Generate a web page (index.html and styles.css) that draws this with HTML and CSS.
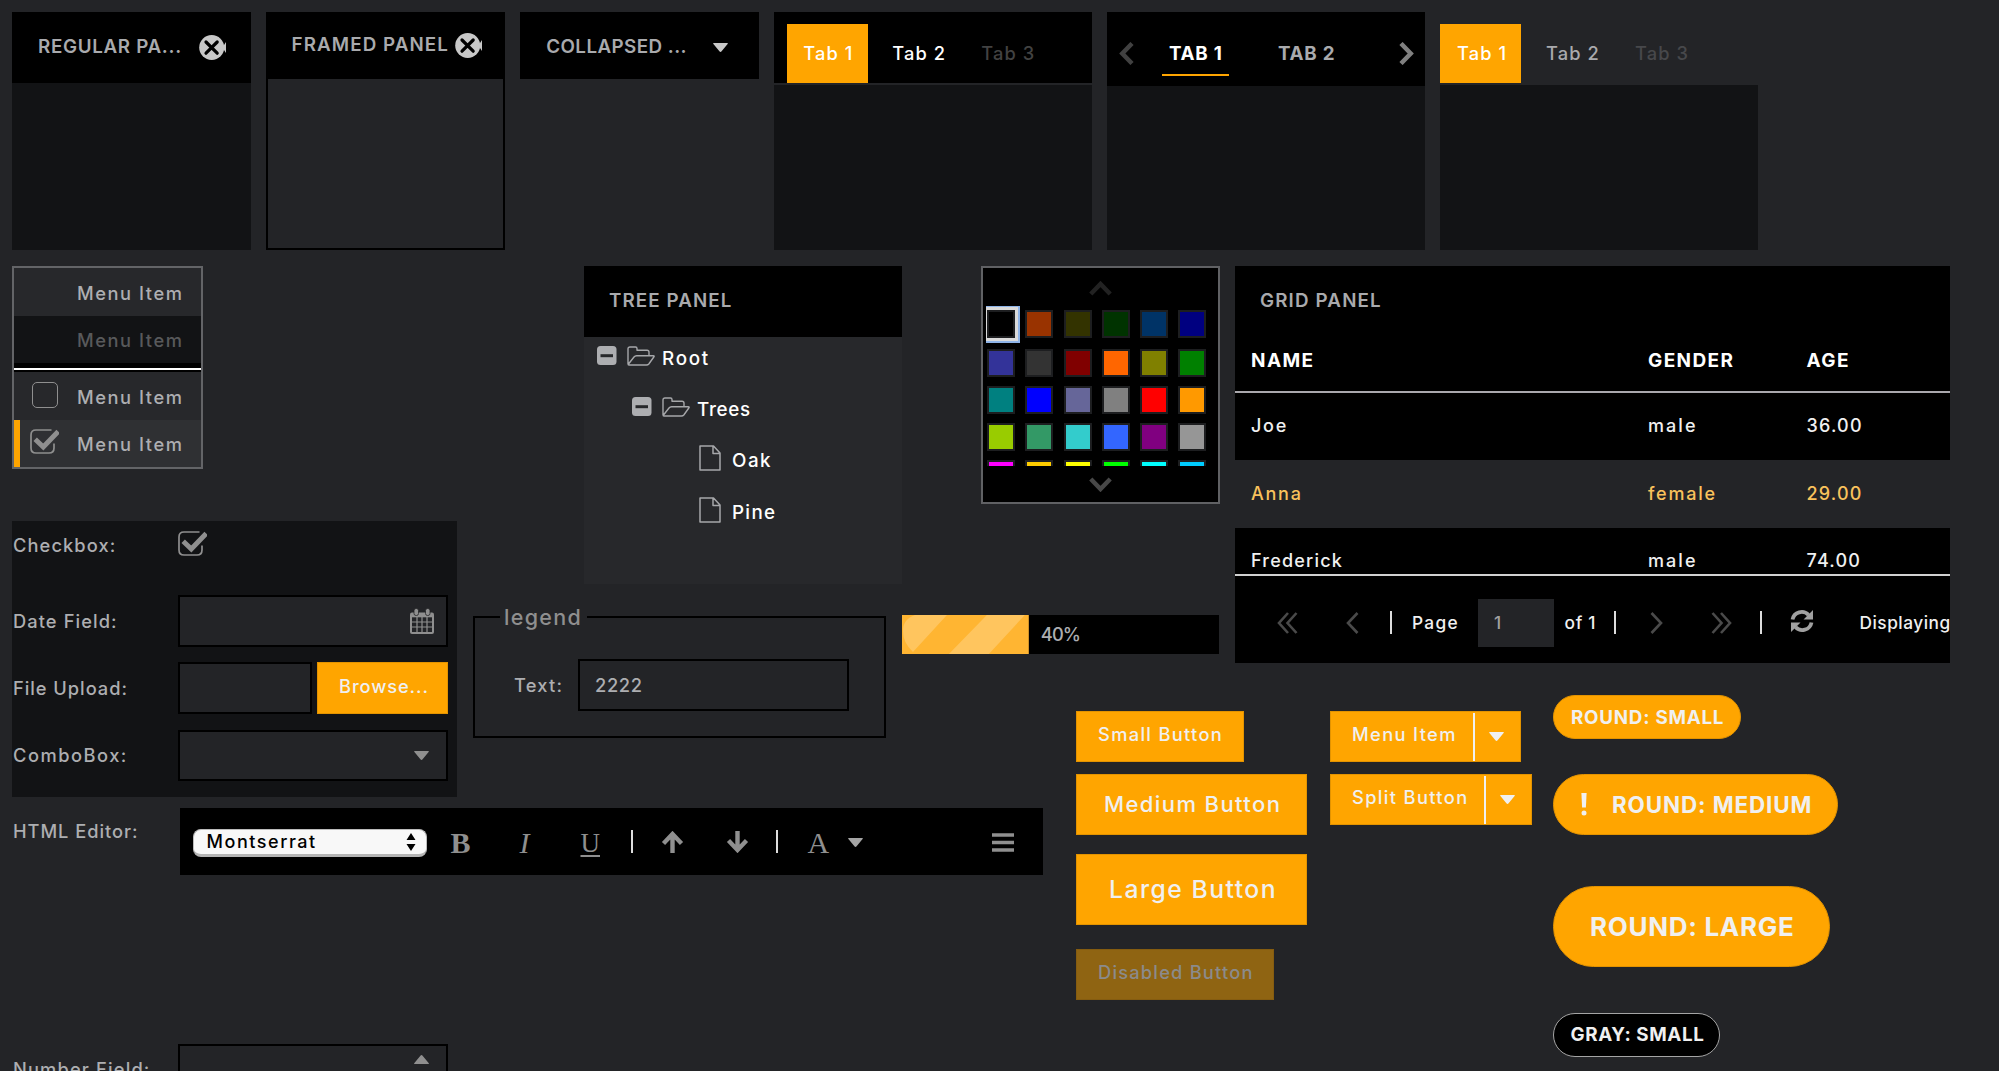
FILE: index.html
```html
<!DOCTYPE html>
<html lang="en">
<head>
<meta charset="utf-8">
<title>Theme Components</title>
<link rel="stylesheet" href="styles.css">
</head>
<body>
<svg class="defs" width="0" height="0">
  <symbol id="close" viewBox="0 0 27 25"><circle cx="12.7" cy="12.5" r="12.5" fill="#c8c8c8"/><path d="M27 7v11l-2-3v-5z" fill="#c8c8c8"/><path d="M7 7l11.200 11.200M18.200 7l-11.200 11.200" stroke="#000" stroke-width="3.200" stroke-linecap="round"/></symbol>
  <symbol id="down" viewBox="0 0 15 9"><path d="M.7 0h13.600q1 0 .3 1l-6 7.300q-1.100 1.200-2.200 0L.4 1q-.7-1 .3-1z" fill="currentColor"/></symbol>
  <symbol id="checked" viewBox="0 0 29 25"><path d="M21.500 1H6Q1 1 1 6v13q0 5 5 5h13q5 0 5-5v-4.500" fill="none" stroke="currentColor" stroke-width="1.700"/><path d="M7 12l6.300 6L26.500 4.300" fill="none" stroke="currentColor" stroke-width="5" stroke-linecap="square" stroke-linejoin="miter"/></symbol>
  <symbol id="minus" viewBox="0 0 20 19"><rect width="19.500" height="19" rx="3.500" fill="#adaeb1"/><path d="M3.500 9.700H16" stroke="#27282b" stroke-width="3"/></symbol>
  <symbol id="folder" viewBox="0 0 28 20"><path d="M1 18V3q0-2 2-2h5.500q1.500 0 1.500 1.500v1.700h10q2 0 2 2V9.700M1.300 18.200L7 11q1-1.300 2.500-1.300h16.700q1.600 0 .6 1.300l-5 7q-.9 1-2.300 1H2q-1.200 0-.7-.8z" fill="none" stroke="#a6a7aa" stroke-width="1.400" stroke-linejoin="round"/></symbol>
  <symbol id="file" viewBox="0 0 22 26"><path d="M1 1h13.500L21 8v17H1zM14 1v7.500h7" fill="none" stroke="#a6a7aa" stroke-width="1.500" stroke-linejoin="round"/></symbol>
  <symbol id="bars" viewBox="0 0 22 19"><path d="M0 2h22M0 9.500h22M0 17h22" stroke="#8f8f8f" stroke-width="3.500"/></symbol>
  <symbol id="up-arrow" viewBox="0 0 23 22"><path d="M11.500 22V4M2.500 12.500l9-9.500 9 9.500" fill="none" stroke="#8f8f8f" stroke-width="4.400"/></symbol>
</svg>

<div class="page">
  <section class="top">
    <div class="panel"><header class="panel-head"><span class="t ls7">REGULAR PA...</span><svg class="close"><use href="#close"/></svg></header></div>
    <div class="panel framed"><header class="panel-head"><span class="t ls11">FRAMED PANEL</span><svg class="close"><use href="#close"/></svg></header></div>
    <div class="panel collapsed"><header class="panel-head"><span class="t ls4">COLLAPSED ...</span><svg class="caret"><use href="#down"/></svg></header></div>
    <div class="tabs boxed"><nav><span class="tab on">Tab 1</span><span class="tab">Tab 2</span><span class="tab off">Tab 3</span></nav><div class="tab-body"></div></div>
    <div class="tabs caps"><nav>
      <svg class="chev dim" viewBox="0 0 15 23"><path d="M13 1.500L3.300 11.500L13 21.500" fill="none" stroke="currentColor" stroke-width="4.500"/></svg>
      <span class="tab on">TAB 1</span><span class="tab">TAB 2</span>
      <svg class="chev" viewBox="0 0 15 23"><path d="M2 1.500l9.700 10L2 21.500" fill="none" stroke="currentColor" stroke-width="4.500"/></svg>
    </nav><div class="tab-body"></div></div>
    <div class="tabs plain"><nav><span class="tab on">Tab 1</span><span class="tab">Tab 2</span><span class="tab off">Tab 3</span></nav><div class="tab-body"></div></div>
  </section>

  <main class="main">
    <div class="left">
      <div class="left-top">
        <div class="col-a">
          <ul class="menu">
            <li><i class="mark"></i>Menu Item</li>
            <li class="disabled"><i class="mark"></i>Menu Item</li>
            <li class="sep"></li>
            <li><i class="mark"><b class="box"></b></i>Menu Item</li>
            <li class="active"><i class="mark"><svg class="check"><use href="#checked"/></svg></i>Menu Item</li>
          </ul>
          <form class="form">
            <div class="row first"><label class="ls11">Checkbox:</label><svg class="check"><use href="#checked"/></svg></div>
            <div class="row"><label class="ls11">Date Field:</label><div class="field"><svg class="cal" viewBox="0 0 24 26"><path d="M2 4.500h20q2 0 2 2V24q0 2-2 2H2q-2 0-2-2V6.500q0-2 2-2z" fill="#8f8f8f"/><path d="M2 9.300h20V24H2z" fill="#232427"/><path d="M7 9v15M12 9v15M17 9v15M2 14h20M2 19h20" stroke="#8f8f8f" stroke-width="1.200"/><rect x="4" y=".5" width="4.500" height="7" rx="2" fill="#8f8f8f" stroke="#232427" stroke-width=".8"/><rect x="15.500" y=".5" width="4.500" height="7" rx="2" fill="#8f8f8f" stroke="#232427" stroke-width=".8"/></svg></div></div>
            <div class="row"><label class="ls10">File Upload:</label><div class="field half"></div><button type="button" class="btn browse">Browse...</button></div>
            <div class="row"><label class="ls16">ComboBox:</label><div class="field"><svg class="caret grey"><use href="#down"/></svg></div></div>
          </form>
        </div>
        <div class="col-b">
          <div class="tree">
            <header class="panel-head"><span class="t ls11">TREE PANEL</span></header>
            <div class="node"><svg class="minus"><use href="#minus"/></svg><svg class="folder"><use href="#folder"/></svg><span class="ls18">Root</span></div>
            <div class="node l2"><svg class="minus"><use href="#minus"/></svg><svg class="folder"><use href="#folder"/></svg><span class="ls7">Trees</span></div>
            <div class="node l3"><svg class="file"><use href="#file"/></svg><span class="ls16">Oak</span></div>
            <div class="node l3"><svg class="file"><use href="#file"/></svg><span class="ls13">Pine</span></div>
          </div>
          <fieldset class="fieldset"><legend>legend</legend><div class="text-row"><label>Text:</label><div class="input">2222</div></div></fieldset>
        </div>
      </div>
      <div class="editor-row">
        <label class="ls10">HTML Editor:</label>
        <div class="editor">
          <div class="select"><span>Montserrat</span><svg width="10" height="18" viewBox="0 0 10 18"><path d="M5 0l4.500 7h-9zM5 18l4.500-7h-9z"/></svg></div>
          <span class="glyph b">B</span><span class="glyph i">I</span><span class="glyph u">U</span>
          <i class="bar"></i>
          <svg class="arrow"><use href="#up-arrow"/></svg><svg class="arrow flip"><use href="#up-arrow"/></svg>
          <i class="bar b2"></i>
          <span class="glyph a">A</span><svg class="caret pick"><use href="#down"/></svg>
          <svg class="bars"><use href="#bars"/></svg>
        </div>
      </div>
      <div class="number-row"><label class="ls12">Number Field:</label><div class="field"><svg class="caret flip grey"><use href="#down"/></svg></div></div>
    </div>

    <div class="right">
      <div class="right-top">
        <div class="col-c">
          <div class="colors">
            <svg class="vchev up" viewBox="0 0 23 15"><path d="M1.800 13L11.500 3l9.700 10" fill="none" stroke="currentColor" stroke-width="4.500"/></svg>
            <div class="swatches">
              <i class="sel" style="background:#000"></i><i style="background:#993300"></i><i style="background:#333300"></i><i style="background:#003300"></i><i style="background:#003366"></i><i style="background:#000080"></i>
              <i style="background:#333399"></i><i style="background:#333333"></i><i style="background:#800000"></i><i style="background:#ff6600"></i><i style="background:#808000"></i><i style="background:#008000"></i>
              <i style="background:#008080"></i><i style="background:#0000ff"></i><i style="background:#666699"></i><i style="background:#808080"></i><i style="background:#ff0000"></i><i style="background:#ff9900"></i>
              <i style="background:#99cc00"></i><i style="background:#339966"></i><i style="background:#33cccc"></i><i style="background:#3366ff"></i><i style="background:#800080"></i><i style="background:#969696"></i>
              <i style="background:#ff00ff"></i><i style="background:#ffcc00"></i><i style="background:#ffff00"></i><i style="background:#00ff00"></i><i style="background:#00ffff"></i><i style="background:#00ccff"></i>
            </div>
            <svg class="vchev" viewBox="0 0 23 15"><path d="M1.800 2l9.700 10 9.700-10" fill="none" stroke="currentColor" stroke-width="4.500"/></svg>
          </div>
          <div class="progress">
            <svg class="fill" viewBox="0 0 127 39" preserveAspectRatio="none" style="width:40%"><rect width="127" height="39" fill="#ffb532"/><path d="M13 0h32L11 37Q1 28 1 16T13 0zM85 0h38L87 39H47z" fill="#ffc55e"/></svg>
            <span>40%</span>
          </div>
        </div>
        <div class="grid">
          <header class="panel-head"><span class="t ls12">GRID PANEL</span></header>
          <div class="tr th"><span>NAME</span><span>GENDER</span><span>AGE</span></div>
          <div class="tr"><span class="ls18">Joe</span><span class="ls20">male</span><span>36.00</span></div>
          <div class="tr picked"><span class="ls18">Anna</span><span class="ls18">female</span><span>29.00</span></div>
          <div class="tr cut"><span>Frederick</span><span class="ls20">male</span><span>74.00</span></div>
          <div class="pager">
            <svg class="dbl" viewBox="0 0 21 22"><path d="M11 1L2 11l9 10M19.500 1l-9 10 9 10" fill="none" stroke="#4a4a4a" stroke-width="2.600"/></svg>
            <svg class="one" viewBox="0 0 13 22"><path d="M11.500 1L2 11l9.500 10" fill="none" stroke="#4a4a4a" stroke-width="2.600"/></svg>
            <i class="bar"></i><span class="pg ls13">Page</span><div class="num">1</div><span class="of">of 1</span><i class="bar p2"></i>
            <svg class="one nx" viewBox="0 0 13 22"><path d="M1.500 1L11 11l-9.500 10" fill="none" stroke="#4a4a4a" stroke-width="2.600"/></svg>
            <svg class="dbl lx" viewBox="0 0 21 22"><path d="M1.500 1l9 10-9 10M10 1l9 10-9 10" fill="none" stroke="#4a4a4a" stroke-width="2.600"/></svg>
            <i class="bar p3"></i>
            <svg class="sync" viewBox="0 0 24 24"><path d="M2.500 10.500A9.300 9.300 0 0 1 18.500 6M21.500 13.500A9.300 9.300 0 0 1 5.500 18" fill="none" stroke="#a0a0a0" stroke-width="3.800"/><path d="M23 1v9.500h-9.500zM1 23v-9.500h9.500z" fill="#a0a0a0"/></svg>
            <span class="disp">Displaying</span>
          </div>
        </div>
      </div>

      <div class="buttons">
        <div class="stack">
          <button class="btn small">Small Button</button>
          <button class="btn medium">Medium Button</button>
          <button class="btn large">Large Button</button>
          <button class="btn small disabled">Disabled Button</button>
        </div>
        <div class="splits">
          <div class="split"><span class="ls16">Menu Item</span><b><svg class="caret white"><use href="#down"/></svg></b></div>
          <div class="split wide"><span>Split Button</span><b><svg class="caret white"><use href="#down"/></svg></b></div>
        </div>
        <div class="rounds">
          <button class="round r-small">ROUND: SMALL</button>
          <button class="round r-medium"><svg width="6" height="23" viewBox="0 0 6 23"><path d="M.4 0h5.200l-.7 14.500H1.100z"/><circle cx="3" cy="20" r="2.500"/></svg>ROUND: MEDIUM</button>
          <button class="round r-large">ROUND: LARGE</button>
          <button class="round r-gray">GRAY: SMALL</button>
        </div>
      </div>
    </div>
  </main>
</div>
</body>
</html>
```
FILE: styles.css
```css
* { box-sizing: border-box; }
html, body { margin: 0; height: 1071px; overflow: hidden; }
body { background: #232427; color: #adaeb1; font: 500 18.3px/26px "Inter", "Liberation Sans", sans-serif; }
svg { display: block; flex: none; }
.defs { position: absolute; }
button { font-family: inherit; border: 0; margin: 0; text-align: left; white-space: nowrap; }
i, b { display: block; font-style: normal; font-weight: inherit; flex: none; }
span { white-space: nowrap; }

.ls4 { letter-spacing: .44px; }
.ls7 { letter-spacing: .68px; }
.ls10 { letter-spacing: .95px; }
.ls11 { letter-spacing: 1.08px; }
.ls12 { letter-spacing: 1.15px; }
.ls13 { letter-spacing: 1.3px; }
.ls16 { letter-spacing: 1.5px; }
.ls18 { letter-spacing: 1.75px; }
.ls20 { letter-spacing: 2.05px; }

.page { width: 1999px; height: 1071px; padding: 12px 0 0 12px; overflow: hidden; }
.top { display: grid; grid-template-columns: 239px 239px 239px 318px 318px 318px; column-gap: 15.100px; height: 254px; align-items: start; }

/* panels */
.panel { height: 238px; background: #121315; }
.panel-head { display: flex; align-items: flex-start; background: #000; height: 71px; padding-left: 26px; font-size: 18.800px; font-weight: 600; color: #a9aaad; line-height: 26px; }
.panel-head .t { margin-top: 21.500px; width: 160px; }
.close { width: 27px; height: 25px; margin-top: 23px; margin-left: 1px; }
.framed { border: 2px solid #000; background: #232427; }
.framed .panel-head { height: 65px; padding-left: 23.500px; }
.framed .t { margin-top: 18px; width: 163px; }
.framed .close { margin-top: 19px; margin-left: 0; }
.collapsed { height: 67px; }
.collapsed .panel-head { height: 67px; }
.collapsed .t { width: 167px; }
.caret { width: 15px; height: 9px; color: #c8c8c8; }
.collapsed .caret { margin-top: 31px; }

/* tabs */
.tabs { height: 238px; display: flex; flex-direction: column; }
.tabs nav { display: flex; height: 71px; align-items: stretch; padding: 12px 0 0 12.500px; background: #000; }
.tab { width: 81px; margin-right: 8px; padding: 16px 0 0 16.500px; color: #fff; letter-spacing: 1.1px; }
.tab.on { background: #ffa500; }
.tab.off { color: #424242; }
.tab-body { flex: 1; background: #121315; }
.boxed .tab-body, .plain .tab-body { margin-top: 1.500px; }
.caps nav { height: 74px; padding: 30px 11px 0 12px; align-items: flex-start; }
.caps .tab { width: 67px; height: 34px; margin: 0 42px 0 27.500px; padding: 0 0 0 7px; font-size: 18.800px; font-weight: 700; letter-spacing: .8px; line-height: 24px; color: #a9aaad; }
.caps .tab.on { color: #fff; background: none; border-bottom: 2px solid #ffa500; }
.caps .tab + .tab { margin: 0 0 0 0; padding-left: 7px; }
.chev { width: 15px; height: 23px; color: #808080; margin-left: auto; }
.chev.dim { color: #414141; margin: 0; }
.plain nav { background: none; padding-left: 0; }
.plain .tab { color: #a9aaad; }
.plain .tab.on { color: #fff; }
.plain .tab.off { color: #47484b; }

/* layout of lower area */
.main { display: flex; }
.left { width: 890px; flex: none; }
.left-top { display: flex; gap: 16px; height: 542px; }
.col-a { width: 445px; }
.col-b { width: 429px; }

/* menu */
.menu { list-style: none; margin: 0; padding: 0; width: 191px; height: 203px; border: 2px solid #636467; background: #000; letter-spacing: 1.550px; }
.menu li { display: flex; align-items: center; height: 47.500px; background: #27282b; padding-top: 2px; white-space: nowrap; }
.menu .mark { width: 63px; height: 30px; }
.menu .disabled { background: #121315; color: #58595b; }
.menu .sep { height: 9px; background: #000; border-top: 5px solid #000; border-bottom: 2px solid #000; padding: 0; }
.menu .sep::before { content: ""; width: 100%; height: 2px; background: #fff; }
.menu .active { background: #2f3033; border-left: 6px solid #ffa500; }
.menu .active .mark { width: 57px; }
.box { width: 26px; height: 26px; border: 1.500px solid #8f8f8f; border-radius: 5px; margin-left: 18px; }
.check { width: 29px; height: 25px; color: #8f8f8f; }
.menu .check { margin-left: 10px; }

/* form */
.form { margin: 52px 0 0; width: 445px; height: 276px; background: #121315; padding: 4.500px 9px 0 0; }
.row { display: flex; align-items: center; height: 52px; margin-bottom: 15.200px; }
.row.first { height: 38px; margin-bottom: 31.500px; }
.row.first .check { margin-top: -3px; }
label { display: block; width: 166px; padding-left: 1px; flex: none; white-space: nowrap; color: #adaeb1; }
.field { flex: 1; height: 51.500px; background: #232427; border: 2px solid #000; display: flex; align-items: center; justify-content: flex-end; padding-right: 12px; }
.field.half { flex: none; width: 134px; margin-right: 5px; }
.caret.grey { color: #8f8f8f; margin-right: 5px; }
.cal { width: 24px; height: 26px; }
.btn { display: block; background: #ffa500; color: #f0f0f0; border: 1px solid #e39300; font-weight: 500; padding: 0; }
.browse { width: 131px; height: 52px; font-size: 18.300px; letter-spacing: .9px; padding: 0 0 4px 21px; }

/* tree */
.tree { margin-left: 111px; width: 318px; height: 317.500px; background: #27282b; color: #fff; font-size: 18.800px; }
.tree .panel-head .t, .grid .panel-head .t { margin-top: 21.500px; }
.tree .panel-head { padding-left: 25px; margin-bottom: -4px; }
.node { display: flex; align-items: center; height: 51.300px; padding-left: 13px; }
.node.l2 { padding-left: 48px; }
.node.l3 { padding-left: 115px; }
.node svg { margin-top: -6px; }
.minus { width: 20px; height: 19px; margin-right: 10px; }
.folder { width: 28px; height: 20px; margin-right: 7px; }
.file { width: 22px; height: 26px; margin-right: 11px; }

/* fieldset */
.fieldset { margin: 20px 0 0; width: 413px; height: 134px; border: 2px solid #000; padding: 0 0 0 39px; min-width: 0; }
.fieldset legend { margin-left: -14px; padding: 0 5px 0 4px; font-size: 21.500px; letter-spacing: 1.300px; line-height: 26px; color: #8f8f8f; }
.text-row { display: flex; align-items: center; margin-top: 29.500px; }
.text-row label { width: 64px; padding-left: 0; letter-spacing: 1.200px; }
.input { width: 271px; height: 51.500px; border: 2px solid #000; line-height: 48px; padding-left: 15px; letter-spacing: .65px; }

/* editor */
.editor-row { display: flex; width: 1031px; }
.editor-row label { width: 168px; padding-top: 10px; }
.editor { width: 863px; height: 67px; background: #000; display: flex; align-items: center; padding: 3px 0 0 12.500px; color: #8f8f8f; }
.editor > * { flex: none; }
.select { width: 234px; height: 28px; border-radius: 8px; background: #f8f8f8; border: 1px solid #bbb; border-bottom: 3px solid #b5b5b5; color: #000; display: flex; align-items: center; justify-content: space-between; padding: 0 10px 0 13px; font-size: 18px; letter-spacing: 1.550px; }
.glyph { font: 700 30px/30px "Liberation Serif", serif; }
.glyph.b { width: 20px; margin-left: 24px; }
.glyph.i { width: 14px; margin-left: 49px; font-style: italic; font-weight: 400; }
.glyph.u { width: 22px; margin-left: 47px; font-weight: 400; font-size: 27px; text-decoration: underline; text-decoration-thickness: 2px; text-underline-offset: 3px; }
.glyph.a { width: 23px; margin-left: 30px; font-weight: 400; }
.bar { width: 2px; height: 23px; background: #ddd; }
.editor .bar { margin-left: 28px; margin-top: -3px; }
.editor .b2 { margin-left: 27px; }
.arrow { width: 23px; height: 22px; margin-left: 28px; margin-top: -2px; }
.arrow.flip { margin-left: 42px; }
.flip { transform: scaleY(-1); }
.caret.pick { margin-left: 17px; color: #a5a5a5; margin-top: -2px; }
.bars { width: 22px; height: 19px; margin-left: 129px; margin-top: -2px; }
.number-row { display: flex; margin-top: 168.500px; width: 436px; }
.number-row label { padding-top: 12.500px; }
.number-row .field { align-items: flex-start; padding-top: 9px; }

/* colour picker */
.right { flex: none; width: 1060px; }
.right-top { display: flex; gap: 15.500px; height: 429px; }
.col-c { width: 317.500px; }
.colors { width: 238.500px; height: 238px; margin-left: 79px; background: #000; border: 2px solid #606164; display: flex; flex-direction: column; align-items: center; color: #484848; }
.vchev { width: 23px; height: 15px; margin-top: 11px; }
.vchev.up { color: #222; margin-top: 13px; }
.swatches { width: 228px; height: 160px; margin-top: 10px; padding: 4px 0 0 1px; display: grid; grid-template-columns: repeat(6, 38.200px); grid-template-rows: 39px; grid-auto-rows: 37.100px; overflow: hidden; }
.swatches i { width: 28px; height: 28px; border: 2px solid #1d1e20; }
.swatches .sel { outline: 3px solid #dadada; box-shadow: 0 0 0 5px #8fb4e8; }
.progress { margin-top: 111px; width: 317px; height: 39px; background: #000; display: flex; align-items: center; }
.fill { height: 39px; }
.progress span { margin: -2px 0 0 12px; letter-spacing: -.900px; }

/* grid */
.grid { width: 714.500px; height: 397px; background: #000; color: #f0f0f0; font-size: 18px; display: flex; flex-direction: column; overflow: hidden; }
.grid .panel-head { height: 66.500px; flex: none; padding-left: 25px; }
.tr { height: 67.700px; flex: none; display: grid; grid-template-columns: 397px 158.500px 1fr; padding-left: 16px; align-items: center; letter-spacing: 1.200px; }
.tr.th { height: 60px; color: #fff; font-size: 19px; font-weight: 700; letter-spacing: 1.400px; border-bottom: 2px solid #aaa8ad; padding-bottom: 2px; }
.picked { background: #232427; color: #f9c25c; }
.cut { height: 48px; border-bottom: 2px solid #d0d0d0; align-items: start; padding-top: 20px; }
.pager { display: flex; align-items: center; height: 86px; padding: 8px 0 0 41.500px; font-size: 17.300px; }
.pager > * { flex: none; }
.dbl { width: 21px; height: 22px; }
.one { width: 13px; height: 22px; margin-left: 48px; }
.pager .bar { width: 2px; margin-left: 31px; }
.pg { margin-left: 20.500px; width: 66px; }
.num { width: 76px; height: 48px; background: #232427; color: #a0a0a0; line-height: 47px; padding-left: 16px; }
.of { margin-left: 10.500px; width: 34px; letter-spacing: .7px; }
.pager .p2 { margin-left: 15px; }
.one.nx { margin-left: 34px; }
.dbl.lx { margin-left: 48px; }
.pager .p3 { margin-left: 28.500px; }
.sync { width: 24px; height: 24px; margin-left: 28px; margin-top: -3px; }
.disp { margin-left: 45.500px; letter-spacing: .5px; }

/* buttons */
.buttons { display: grid; grid-template-columns: 254px 222.500px 290px; padding-left: 174px; align-items: start; }
.stack { padding-top: 16px; display: flex; flex-direction: column; }
.small { width: 168px; height: 51px; padding: 0 0 4.500px 21px; font-size: 18.300px; letter-spacing: 1.320px; }
.medium { width: 231px; height: 60.500px; margin-top: 12px; padding: 0 0 1px 27px; font-size: 22px; letter-spacing: 1.400px; }
.large { width: 231px; height: 70.500px; margin-top: 19.500px; padding-left: 32px; font-size: 24.700px; letter-spacing: 1.500px; }
.small.disabled { width: 198px; margin-top: 24.500px; background: #8f6412; color: #8b8b8b; border-color: #855c10; letter-spacing: 1.200px; }
.splits { padding-top: 16px; }
.split { width: 191px; height: 51px; margin-bottom: 12px; background: #ffa500; border: 1px solid #e39300; color: #f0f0f0; display: flex; align-items: center; padding-left: 21px; }
.split span { flex: 1; letter-spacing: 1.360px; margin-top: -5px; }
.split b { width: 47px; height: 48px; border-left: 2px solid #f0f0f0; padding: 19px 0 0 14px; }
.split.wide { width: 201.500px; }
.caret.white { color: #f0f0f0; }
.round { display: flex; align-items: center; background: #ffa500; color: #f0f0f0; border: 1px solid #e39300; font-weight: 700; padding: 0; border-radius: 22px; }
.r-small { width: 188.500px; height: 44px; font-size: 18.800px; letter-spacing: .75px; padding-left: 17.500px; }
.r-medium { width: 285.500px; height: 60.500px; margin-top: 35px; border-radius: 31px; font-size: 22.400px; letter-spacing: .9px; padding-left: 27px; }
.r-medium svg { fill: #f0f0f0; margin-right: 25.500px; }
.r-large { width: 277px; height: 81px; margin-top: 51px; border-radius: 41px; font-size: 26px; letter-spacing: .7px; padding-left: 36.500px; }
.r-gray { width: 167.500px; height: 43.500px; margin-top: 46.500px; background: #000; border: 1.500px solid #a5a5a5; font-size: 18.800px; letter-spacing: .6px; padding-left: 17px; }
```
